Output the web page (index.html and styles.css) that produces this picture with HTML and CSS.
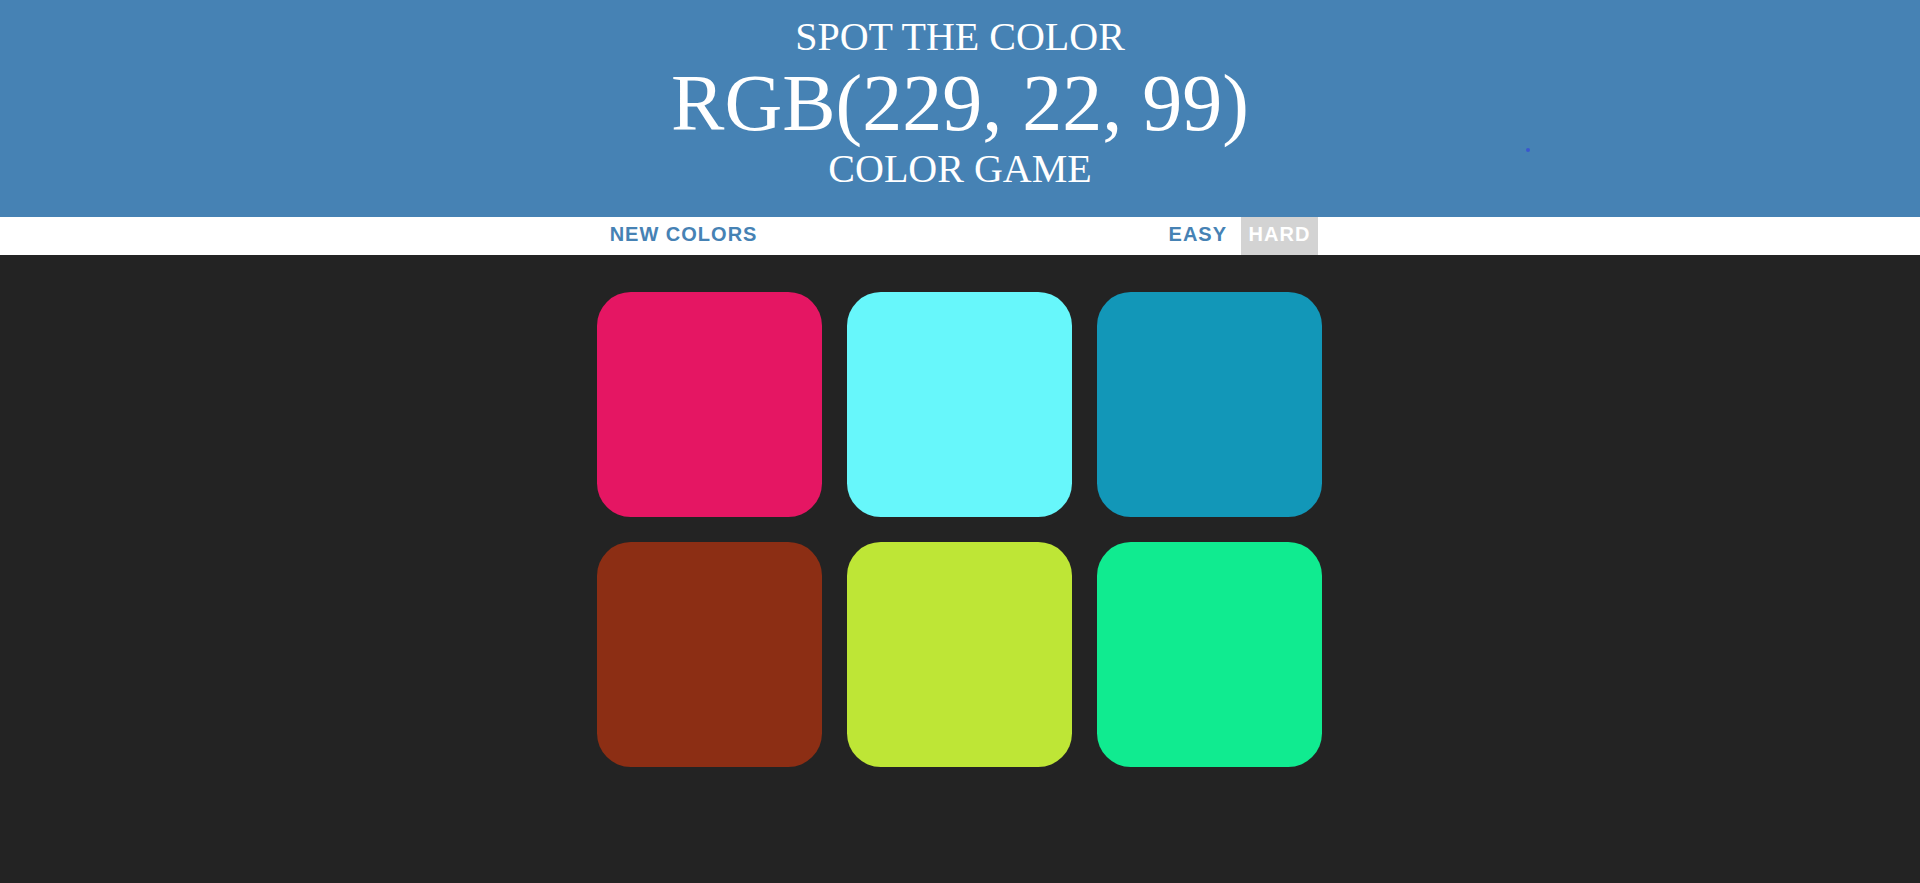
FILE: index.html
```html
<!DOCTYPE html>
<html lang="en">
<head>
<meta charset="utf-8">
<title>Color Game</title>
<link rel="stylesheet" href="styles.css">
</head>
<body>
<h1 class="title">
  Spot the color
  <span class="color-display">RGB(229, 22, 99)</span>
  Color Game
</h1>
<div class="stripe">
  <button class="btn">New Colors</button>
  <span class="message"></span>
  <button class="btn">Easy</button>
  <button class="btn selected">Hard</button>
</div>
<div class="board">
  <div class="square sq1"></div>
  <div class="square sq2"></div>
  <div class="square sq3"></div>
  <div class="square sq4"></div>
  <div class="square sq5"></div>
  <div class="square sq6"></div>
</div>
<span class="dot"></span>
</body>
</html>
```
FILE: styles.css
```css
html, body {
  margin: 0;
  padding: 0;
}
body {
  background: #232323;
  font-family: "Liberation Serif", "Times New Roman", serif;
  position: relative;
  min-height: 883px;
}
.title {
  margin: 0;
  padding: 15px 0 26px;
  background: steelblue;
  color: #fff;
  text-align: center;
  font-weight: normal;
  text-transform: uppercase;
  font-size: 40px;
  line-height: 44px;
}
.color-display {
  display: block;
  font-size: 80px;
  line-height: 88px;
}
.stripe {
  background: #fff;
  height: 38px;
  text-align: center;
  font-family: "Liberation Sans", Arial, sans-serif;
  font-size: 20px;
  line-height: 38px;
  overflow: hidden;
}
.btn {
  border: none;
  background: none;
  height: 38px;
  padding: 0 8px 4px;
  margin: 0;
  font-family: "Liberation Sans", Arial, sans-serif;
  font-size: 20px;
  font-weight: 700;
  letter-spacing: 1px;
  text-transform: uppercase;
  color: steelblue;
  vertical-align: top;
  cursor: pointer;
}
.btn.selected {
  background: #d3d3d3;
  color: #fff;
}
.message {
  display: inline-block;
  width: 20%;
}
.board {
  display: grid;
  grid-template-columns: repeat(3, 225px);
  gap: 25px;
  justify-content: center;
  padding: 37px 2px 0 0;
}
.square {
  width: 225px;
  height: 225px;
  border-radius: 15%;
}
.sq1 { background: #e51663; }
.sq2 { background: #67f7fb; }
.sq3 { background: #1297b8; }
.sq4 { background: #8c2e14; }
.sq5 { background: #bee636; }
.sq6 { background: #10eb90; }
.dot {
  position: absolute;
  left: 1526px;
  top: 148px;
  width: 4px;
  height: 4px;
  border-radius: 50%;
  background: #3a57cf;
}
```
